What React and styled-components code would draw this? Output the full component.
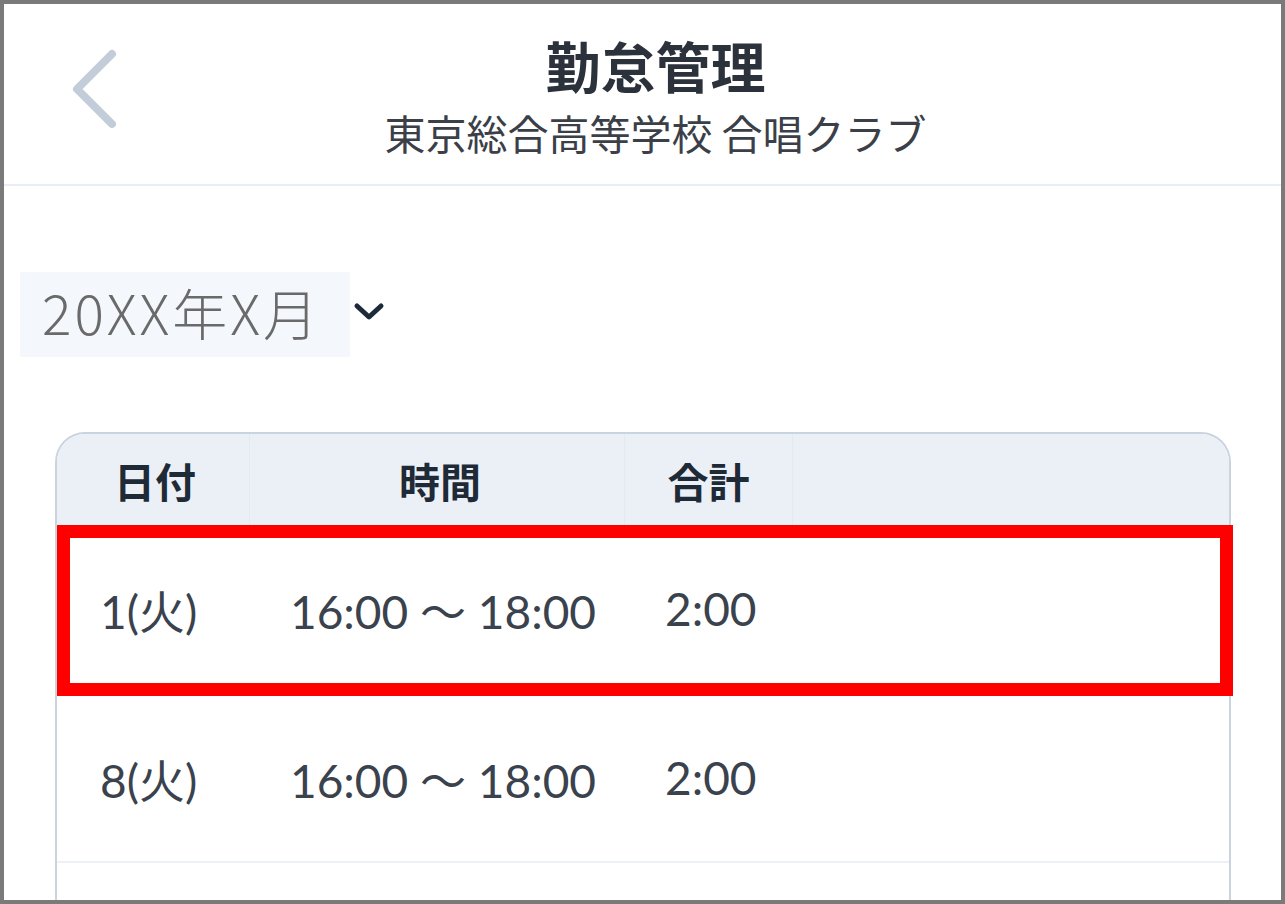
import React from 'react';
import styled, { createGlobalStyle } from 'styled-components';

const GlobalStyle = createGlobalStyle`
  html, body {
    margin: 0;
    padding: 0;
    background: #ffffff;
  }
  * {
    box-sizing: border-box;
  }
`;

const Frame = styled.div`
  width: 1285px;
  height: 904px;
  border: 4px solid #7a7a7a;
  background: #ffffff;
  overflow: hidden;
  font-family: "Noto Sans CJK JP", "Noto Sans", sans-serif;
`;

const Header = styled.header`
  display: flex;
  align-items: center;
  height: 182px;
  border-bottom: 2px solid #e9eef4;
`;

const BackCell = styled.div`
  width: 150px;
  display: flex;
  align-items: center;
  padding-left: 64px;
  margin-top: -8px;
`;

const SideCell = styled.div`
  width: 124px;
`;

const TitleBlock = styled.div`
  flex: 1;
  display: flex;
  flex-direction: column;
  align-items: center;
  gap: 10px;
`;

const Title = styled.h1`
  margin: 0;
  font-size: 55px;
  line-height: 66px;
  font-weight: 700;
  color: #2b323b;
`;

const Subtitle = styled.p`
  margin: 0;
  font-size: 41px;
  line-height: 50px;
  font-weight: 400;
  color: #3b4048;
`;

const Content = styled.main`
  padding: 86px 0 0 16px;
`;

const MonthRow = styled.div`
  display: flex;
  align-items: center;
  gap: 2px;
`;

const MonthBox = styled.div`
  width: 330px;
  height: 85px;
  background: #f4f7fb;
  display: flex;
  align-items: center;
  padding: 0 0 8px 22px;
  font-size: 55px;
  font-weight: 300;
  color: #6a6a6a;
  letter-spacing: 3px;
`;

const ArrowWrap = styled.div`
  display: flex;
  margin-top: -6px;
`;

const Card = styled.div`
  margin: 75px 50px 0 35px;
  border: 2px solid #cad4df;
  border-bottom: none;
  border-radius: 30px 30px 0 0;
`;

const Grid = styled.div`
  display: grid;
  grid-template-columns: 193px 375px 168px 1fr;
  align-items: center;
`;

const HeadRow = styled(Grid)`
  height: 91px;
  background: #ebf0f7;
  border-radius: 28px 28px 0 0;
`;

const HeadCell = styled.div`
  height: 100%;
  display: flex;
  align-items: center;
  justify-content: center;
  padding-left: ${(p) => p.$shift || 0}px;
  font-size: 41px;
  font-weight: 700;
  color: #1f2a37;
  border-right: ${(p) => (p.$last ? 'none' : '1px solid #e4eaf2')};
`;

const Row = styled(Grid)`
  position: relative;
  height: 169px;
  border-bottom: 2px solid #edf1f6;
  font-family: Lato, "Noto Sans CJK JP", sans-serif;
  font-size: 46px;
  color: #3a424d;
`;

const Cell = styled.div`
  padding-left: ${(p) => p.$pad}px;
  white-space: nowrap;
`;

const Highlight = styled.div`
  position: absolute;
  left: 0;
  right: -4px;
  top: 0;
  bottom: -4px;
  border: 13px solid #ff0000;
  pointer-events: none;
`;

const BackIcon = () => (
  <svg width="52" height="84" viewBox="0 0 52 84" fill="none">
    <polyline
      points="44,6 9,41 44,76"
      stroke="#c3cdd9"
      strokeWidth="8"
      strokeLinecap="round"
      strokeLinejoin="round"
    />
  </svg>
);

const ChevronDown = () => (
  <svg width="34" height="22" viewBox="0 0 34 22" fill="none">
    <polyline
      points="5,5 17,16 29,5"
      stroke="#1d2a3a"
      strokeWidth="5"
      strokeLinecap="round"
      strokeLinejoin="round"
    />
  </svg>
);

const records = [
  { day: '1(火)', time: '16:00 ～ 18:00', total: '2:00', marked: true },
  { day: '8(火)', time: '16:00 ～ 18:00', total: '2:00' },
];

export default function App() {
  return (
    <>
      <GlobalStyle />
      <Frame>
        <Header>
          <BackCell>
            <BackIcon />
          </BackCell>
          <TitleBlock>
            <Title>勤怠管理</Title>
            <Subtitle>東京総合高等学校 合唱クラブ</Subtitle>
          </TitleBlock>
          <SideCell />
        </Header>

        <Content>
          <MonthRow>
            <MonthBox>20XX年X月</MonthBox>
            <ArrowWrap>
              <ChevronDown />
            </ArrowWrap>
          </MonthRow>

          <Card>
            <HeadRow>
              <HeadCell $shift={4}>日付</HeadCell>
              <HeadCell $shift={6}>時間</HeadCell>
              <HeadCell>合計</HeadCell>
              <HeadCell $last />
            </HeadRow>
            {records.map((r) => (
              <Row key={r.day}>
                <Cell $pad={43}>{r.day}</Cell>
                <Cell $pad={40}>{r.time}</Cell>
                <Cell $pad={40}>{r.total}</Cell>
                <Cell />
                {r.marked && <Highlight />}
              </Row>
            ))}
            <Row />
          </Card>
        </Content>
      </Frame>
    </>
  );
}
